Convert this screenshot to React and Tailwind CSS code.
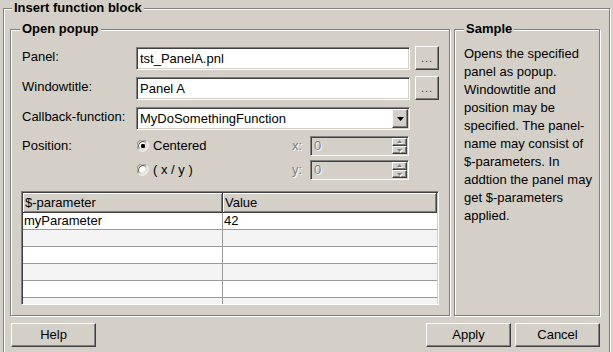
import React from "react";

const sunken =
  "border border-t-[#808080] border-l-[#808080] border-b-white border-r-white shadow-[inset_1px_1px_0_#404040,inset_-1px_-1px_0_#d4d0c8]";
const raised =
  "border border-t-white border-l-white border-b-[#404040] border-r-[#404040] shadow-[inset_-1px_-1px_0_#808080]";
const etched = "border border-[#808080] shadow-[inset_1px_1px_0_#fff,1px_1px_0_#fff]";
const disabledText = "text-[#808080] [text-shadow:1px_1px_0_#fff]";

function GroupTitle({ children, left = "left-[9px]" }) {
  return (
    <span
      className={`absolute ${left} top-[-9px] px-[2px] bg-[#d4d0c8] font-bold text-[13px] leading-[16px] text-black`}
    >
      {children}
    </span>
  );
}

function TextField({ value }) {
  return (
    <div className={`${sunken} mt-[1px] w-[274px] h-[23px] bg-white flex items-center pl-[3px] text-[13px] leading-[16px]`}>
      {value}
    </div>
  );
}

function DotsButton() {
  return (
    <div className={`${raised} ml-[5px] w-[24px] h-[24px] flex items-center justify-center text-[11px] text-[#404040] tracking-[1px]`}>
      ...
    </div>
  );
}

function Radio({ checked }) {
  return (
    <svg width="12" height="12" viewBox="0 0 12 12" className="shrink-0">
      <path d="M1.5 9.5 A5.5 5.5 0 0 1 9.5 1.5" fill="none" stroke="#808080" strokeWidth="1" />
      <path d="M2.5 8.5 A4.3 4.3 0 0 1 8.5 2.5" fill="none" stroke="#404040" strokeWidth="1" />
      <circle cx="6" cy="6" r="3.8" fill="#fff" />
      <path d="M1.5 9.5 A5.5 5.5 0 0 0 9.5 1.5" fill="none" stroke="#ffffff" strokeWidth="1" />
      <path d="M2.5 8.5 A4.3 4.3 0 0 0 8.5 2.5" fill="none" stroke="#d4d0c8" strokeWidth="1" />
      {checked && <rect x="4" y="4" width="4" height="4" rx="1.2" fill="#000" />}
    </svg>
  );
}

function SpinBox() {
  const btn = `${raised} flex-1 flex items-center justify-center bg-[#d4d0c8]`;
  const Arrow = ({ up }) => (
    <svg width="7" height="5" viewBox="0 0 7 5">
      <polygon points={up ? "4.5,1 7,4 2,4" : "2,2 7,2 4.5,5"} fill="#fff" />
      <polygon points={up ? "3.5,0 6,3 1,3" : "1,1 6,1 3.5,4"} fill="#808080" />
    </svg>
  );
  return (
    <div className={`${sunken} w-[99px] h-[20px] bg-[#d4d0c8] p-[1px] flex`}>
      <div className={`flex-1 flex items-center pl-[2px] text-[13px] leading-[16px] ${disabledText}`}>0</div>
      <div className="w-[15px] flex flex-col">
        <div className={btn}>
          <Arrow up />
        </div>
        <div className={btn}>
          <Arrow />
        </div>
      </div>
    </div>
  );
}

const rows = [
  ["myParameter", "42"],
  ["", ""],
  ["", ""],
  ["", ""],
  ["", ""],
  ["", ""],
];

export default function App() {
  return (
    <div className="w-[613px] h-[352px] overflow-hidden bg-[#d4d0c8] pl-[3px] pt-[8px] font-['Liberation_Sans',Arial,sans-serif] text-black text-[13px]">
      <div className={`relative w-[607px] h-[400px] ${etched} pl-[6px] pt-[20px]`}>
        <GroupTitle left="left-[8px]">Insert function block</GroupTitle>
        <div className="flex gap-[4px]">
          {/* Open popup */}
          <div className={`relative w-[440px] h-[287px] ${etched} flex flex-col pl-[10px] pt-[16px]`}>
            <GroupTitle>Open popup</GroupTitle>

            <div className="flex items-start h-[24px]">
              <div className="w-[115px] pl-[1px] mt-[3px] leading-[16px]">Panel:</div>
              <TextField value="tst_PanelA.pnl" />
              <DotsButton />
            </div>

            <div className="flex items-start h-[24px] mt-[6px]">
              <div className="w-[115px] pl-[1px] mt-[3px] leading-[16px]">Windowtitle:</div>
              <TextField value="Panel A" />
              <DotsButton />
            </div>

            <div className="flex items-start h-[24px] mt-[6px]">
              <div className="w-[115px] pl-[1px] mt-[3px] leading-[16px]">Callback-function:</div>
              <div className={`${sunken} mt-[1px] w-[274px] h-[23px] bg-white p-[1px] flex`}>
                <div className="flex-1 flex items-center pl-[2px] leading-[16px]">MyDoSomethingFunction</div>
                <div className={`${raised} w-[16px] h-full bg-[#d4d0c8] flex items-center justify-center`}>
                  <svg width="7" height="4" viewBox="0 0 7 4">
                    <polygon points="0,0 7,0 3.5,4" fill="#000" />
                  </svg>
                </div>
              </div>
            </div>

            <div className="flex items-center h-[20px] mt-[6px]">
              <div className="w-[115px] pl-[1px] leading-[16px]">Position:</div>
              <div className="w-[156px] pl-[1px] flex items-center">
                <Radio checked />
                <span className="ml-[4px] leading-[16px]">Centered</span>
              </div>
              <div className={`w-[18px] leading-[16px] ${disabledText}`}>x:</div>
              <SpinBox />
            </div>

            <div className="flex items-center h-[20px] mt-[4px]">
              <div className="w-[115px]" />
              <div className="w-[156px] pl-[1px] flex items-center">
                <Radio />
                <span className="ml-[4px] leading-[16px]">( x / y )</span>
              </div>
              <div className={`w-[18px] leading-[16px] ${disabledText}`}>y:</div>
              <SpinBox />
            </div>

            {/* Table */}
            <div className={`${sunken} mt-[11px] w-[418px] h-[114px] bg-white p-[1px] overflow-hidden`}>
              <div className="flex h-[20px] bg-[#d4d0c8]">
                <div className="w-[200px] h-full border-r border-b border-[#404040] shadow-[inset_1px_1px_0_#fff,inset_-1px_-1px_0_#808080] flex items-center pl-[2px] leading-[16px]">
                  $-parameter
                </div>
                <div className="flex-1 h-full border-r border-b border-[#404040] shadow-[inset_1px_1px_0_#fff,inset_-1px_-1px_0_#808080] flex items-center pl-[2px] leading-[16px]">
                  Value
                </div>
              </div>
              {rows.map((r, i) => (
                <div
                  key={i}
                  className={`flex h-[17px] shrink-0 border-b border-[#9a9a9a] ${i % 2 === 0 ? "bg-white" : "bg-[#f4f4f4]"}`}
                >
                  <div className="w-[200px] h-full border-r border-[#9a9a9a] flex items-center pl-[1px] leading-[16px]">
                    {r[0]}
                  </div>
                  <div className="flex-1 h-full flex items-center pl-[1px] leading-[16px]">{r[1]}</div>
                </div>
              ))}
            </div>
          </div>

          {/* Sample */}
          <div className={`relative w-[146px] h-[287px] ${etched} pl-[9px] pt-[15px]`}>
            <GroupTitle>Sample</GroupTitle>
            <p className="text-[13px] leading-[18px] whitespace-nowrap">
              Opens the specified
              <br />
              panel as popup.
              <br />
              Windowtitle and
              <br />
              position may be
              <br />
              specified. The panel-
              <br />
              name may consist of
              <br />
              $-parameters. In
              <br />
              addtion the panel may
              <br />
              get $-parameters
              <br />
              applied.
            </p>
          </div>
        </div>

        {/* Buttons */}
        <div className="flex mt-[7px] w-[590px] pl-[1px]">
          <div className={`${raised} w-[85px] h-[24px] flex items-center justify-center leading-[16px]`}>Help</div>
          <div className={`${raised} ml-auto w-[85px] h-[24px] flex items-center justify-center leading-[16px]`}>Apply</div>
          <div className={`${raised} ml-[4px] w-[85px] h-[24px] flex items-center justify-center leading-[16px]`}>Cancel</div>
        </div>
      </div>
    </div>
  );
}
